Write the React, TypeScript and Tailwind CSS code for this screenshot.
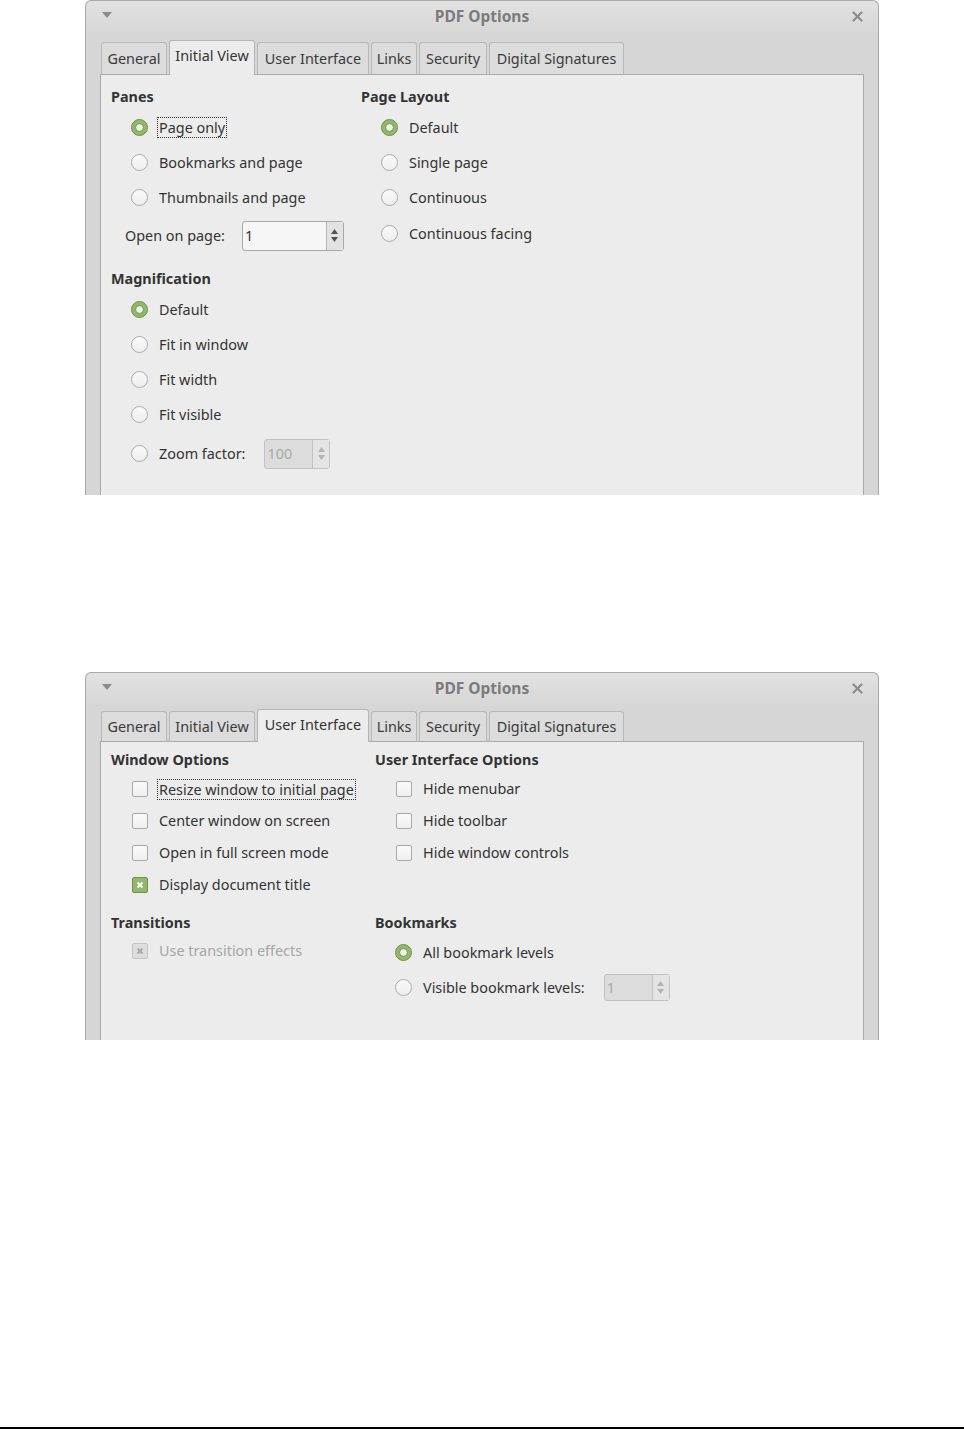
import React from "react";

const font = { fontFamily: '"Noto Sans", "Open Sans", sans-serif' };

const tabs: { label: string; w: number }[] = [
  { label: "General", w: 66 },
  { label: "Initial View", w: 86 },
  { label: "User Interface", w: 112 },
  { label: "Links", w: 46 },
  { label: "Security", w: 68 },
  { label: "Digital Signatures", w: 135 },
];

function TitleBar() {
  return (
    <div className="relative flex h-[33px] items-center justify-center rounded-t-[6px] bg-gradient-to-b from-[#e2e2e2] to-[#d6d6d6] pb-[2px]">
      <svg className="absolute left-[16px] top-[11px]" width="10" height="7" viewBox="0 0 10 7">
        <path d="M0 0 L10 0 L5 6 Z" fill="#8c8c8c" />
      </svg>
      <span className="text-[15.5px] font-bold text-[#7b7b7b]">PDF Options</span>
      <svg className="absolute right-[15px] top-[10px]" width="11" height="11" viewBox="0 0 11 11">
        <path d="M1.5 1.5 L9.5 9.5 M9.5 1.5 L1.5 9.5" stroke="#8c8c8c" strokeWidth="2.2" strokeLinecap="round" />
      </svg>
    </div>
  );
}

function TabRow({ active, rowTop, rowHeight }: { active: string; rowTop: number; rowHeight: number }) {
  return (
    <div className="flex items-end gap-[2px] pl-[15px]" style={{ marginTop: rowTop, height: rowHeight }}>
      {tabs.map((t) =>
        t.label === active ? (
          <div
            key={t.label}
            className="relative z-10 -mb-px flex h-full items-start justify-center rounded-t-[3px] border border-b-0 border-[#b4b4b4] bg-[#ececec] pt-[4px] text-[14.4px] text-[#333]"
            style={{ width: t.w }}
          >
            {t.label}
          </div>
        ) : (
          <div
            key={t.label}
            className="flex h-[calc(100%-3px)] items-center justify-center rounded-t-[3px] border border-b-0 border-[#b8b8b8] bg-[#dcdcdc] text-[14.4px] text-[#3a3a3a]"
            style={{ width: t.w }}
          >
            {t.label}
          </div>
        )
      )}
    </div>
  );
}

function Radio({ checked }: { checked?: boolean }) {
  if (checked) {
    return (
      <span className="flex h-[17px] w-[17px] shrink-0 items-center justify-center rounded-full border border-[#6e9448] bg-[#93b86d]">
        <span className="h-[9px] w-[9px] rounded-full border border-[#6e9448] bg-[#eef3e8]" />
      </span>
    );
  }
  return (
    <span className="h-[17px] w-[17px] shrink-0 rounded-full border border-[#ababab] bg-gradient-to-b from-[#fafafa] to-[#eeeeee]" />
  );
}

function Check({ checked, disabled }: { checked?: boolean; disabled?: boolean }) {
  if (checked) {
    return (
      <span
        className={
          disabled
            ? "flex h-[16px] w-[16px] shrink-0 items-center justify-center rounded-[2px] border border-[#c4c4c4] bg-[#dedede]"
            : "flex h-[16px] w-[16px] shrink-0 items-center justify-center rounded-[2px] border border-[#6e9448] bg-[#93b86d]"
        }
      >
        <svg width="8" height="8" viewBox="0 0 8 8">
          <path
            d="M1.5 1.5 L6.5 6.5 M6.5 1.5 L1.5 6.5"
            stroke={disabled ? "#a8a8a8" : "#ffffff"}
            strokeWidth="1.8"
          />
        </svg>
      </span>
    );
  }
  return (
    <span className="h-[16px] w-[16px] shrink-0 rounded-[2px] border border-[#a9a9a9] bg-gradient-to-b from-[#fafafa] to-[#efefef]" />
  );
}

function Spin({ value, width, height, disabled }: { value: string; width: number; height: number; disabled?: boolean }) {
  return (
    <div
      className={
        disabled
          ? "flex shrink-0 rounded-[3px] border border-[#c2c2c2] bg-[#dcdcdc]"
          : "flex shrink-0 rounded-[3px] border border-[#a8a8a8] bg-[#f6f6f6]"
      }
      style={{ width, height }}
    >
      <div
        className={
          disabled
            ? "flex flex-1 items-center pl-[2px] text-[14.4px] text-[#a8a8a8]"
            : "flex flex-1 items-center pl-[2px] text-[14.4px] text-[#333]"
        }
      >
        {value}
      </div>
      <div
        className={
          disabled
            ? "flex w-[17px] flex-col items-center justify-center gap-[3px] border-l border-[#c2c2c2] bg-[#e4e4e4]"
            : "flex w-[17px] flex-col items-center justify-center gap-[3px] border-l border-[#b4b4b4] bg-[#e2e2e2]"
        }
      >
        <svg width="7" height="5" viewBox="0 0 7 5">
          <path d="M0 5 L3.5 0 L7 5 Z" fill={disabled ? "#b4b4b4" : "#555"} />
        </svg>
        <svg width="7" height="5" viewBox="0 0 7 5">
          <path d="M0 0 L3.5 5 L7 0 Z" fill={disabled ? "#b4b4b4" : "#555"} />
        </svg>
      </div>
    </div>
  );
}

function Heading({ children, mt = 0, mb = 3 }: { children: React.ReactNode; mt?: number; mb?: number }) {
  return (
    <div className="h-[20px] text-[14.4px] font-bold leading-[20px] text-[#333]" style={{ marginTop: mt, marginBottom: mb }}>
      {children}
    </div>
  );
}

function Label({ children, focus, disabled }: { children: React.ReactNode; focus?: boolean; disabled?: boolean }) {
  return (
    <span
      className={
        focus
          ? "-ml-[2px] border border-dotted border-[#333] px-px leading-[19px] text-[#333]"
          : disabled
            ? "text-[#a6a6a6]"
            : "text-[#333]"
      }
    >
      {children}
    </span>
  );
}

function RadioRow({ label, checked, focus, h = 35, children }: { label: string; checked?: boolean; focus?: boolean; h?: number; children?: React.ReactNode }) {
  return (
    <div className="flex items-center pl-[20px] text-[14.4px]" style={{ height: h }}>
      <Radio checked={checked} />
      <span className="ml-[11px] flex items-center">
        <Label focus={focus}>{label}</Label>
      </span>
      {children}
    </div>
  );
}

function CheckRow({ label, checked, focus, disabled }: { label: string; checked?: boolean; focus?: boolean; disabled?: boolean }) {
  return (
    <div className="flex h-[32px] items-center pl-[21px] text-[14.4px]">
      <Check checked={checked} disabled={disabled} />
      <span className="ml-[11px] flex items-center">
        <Label focus={focus} disabled={disabled}>
          {label}
        </Label>
      </span>
    </div>
  );
}

function Dialog({
  active,
  height,
  rowTop,
  rowHeight,
  children,
}: {
  active: string;
  height: number;
  rowTop: number;
  rowHeight: number;
  children: React.ReactNode;
}) {
  return (
    <div
      className="ml-[85px] flex w-[794px] flex-col overflow-hidden rounded-t-[6px] border border-b-0 border-[#a9a9a9] bg-[#d6d6d6]"
      style={{ height }}
    >
      <TitleBar />
      <div className="flex flex-1 flex-col">
        <TabRow active={active} rowTop={rowTop} rowHeight={rowHeight} />
        <div className="mx-[14px] flex-1 border border-b-0 border-[#a9a9a9] bg-[#ececec]">{children}</div>
      </div>
    </div>
  );
}

export default function App() {
  return (
    <div className="flex h-[1429px] flex-col bg-white" style={font}>
      <Dialog active="Initial View" height={495} rowTop={5} rowHeight={35}>
        <div className="flex pl-[10px] pt-[12px]">
          <div className="w-[250px]">
            <Heading>Panes</Heading>
            <RadioRow label="Page only" checked focus />
            <RadioRow label="Bookmarks and page" />
            <RadioRow label="Thumbnails and page" />
            <div className="flex h-[41px] items-center pl-[14px] text-[14.4px] text-[#333]">
              <span>Open on page:</span>
              <span className="ml-[17px]">
                <Spin value="1" width={102} height={30} />
              </span>
            </div>
            <Heading mt={13}>Magnification</Heading>
            <RadioRow label="Default" checked />
            <RadioRow label="Fit in window" />
            <RadioRow label="Fit width" />
            <RadioRow label="Fit visible" />
            <RadioRow label="Zoom factor:" h={43}>
              <span className="ml-[19px]">
                <Spin value="100" width={66} height={30} disabled />
              </span>
            </RadioRow>
          </div>
          <div className="w-[250px]">
            <Heading>Page Layout</Heading>
            <RadioRow label="Default" checked h={35} />
            <RadioRow label="Single page" />
            <RadioRow label="Continuous" />
            <RadioRow label="Continuous facing" h={37} />
          </div>
        </div>
      </Dialog>

      <div className="h-[177px] shrink-0" />

      <Dialog active="User Interface" height={368} rowTop={2} rowHeight={33}>
        <div className="flex pl-[10px] pt-[8px]">
          <div className="w-[264px]">
            <Heading>Window Options</Heading>
            <CheckRow label="Resize window to initial page" focus />
            <CheckRow label="Center window on screen" />
            <CheckRow label="Open in full screen mode" />
            <CheckRow label="Display document title" checked />
            <Heading mt={12} mb={2}>
              Transitions
            </Heading>
            <CheckRow label="Use transition effects" checked disabled />
          </div>
          <div className="w-[300px]">
            <Heading>User Interface Options</Heading>
            <CheckRow label="Hide menubar" />
            <CheckRow label="Hide toolbar" />
            <CheckRow label="Hide window controls" />
            <div className="h-[32px]" />
            <Heading mt={12} mb={2}>
              Bookmarks
            </Heading>
            <RadioRow label="All bookmark levels" checked />
            <RadioRow label="Visible bookmark levels:">
              <span className="ml-[19px]">
                <Spin value="1" width={66} height={27} disabled />
              </span>
            </RadioRow>
          </div>
        </div>
      </Dialog>

      <div className="flex-1" />
      <div className="h-[2px] shrink-0 bg-black" />
    </div>
  );
}
